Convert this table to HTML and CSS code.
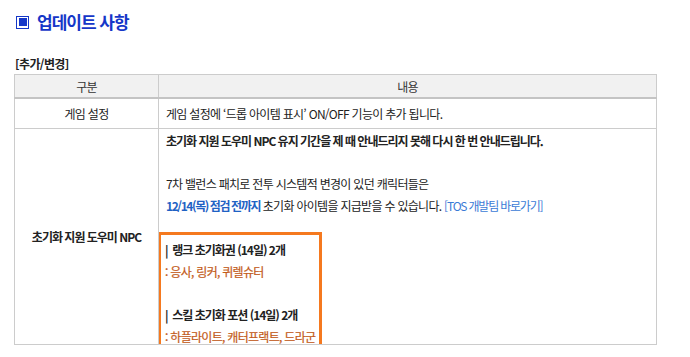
FILE: index.html
```html
<!DOCTYPE html>
<html lang="ko">
<head>
    <meta charset="UTF-8">
    <meta name="viewport" content="width=device-width, initial-scale=1.0">
    <title>업데이트 사항</title>
    <link rel="stylesheet" href="styles.css">
</head>
<body>
    <div class="notice">
        <h2 class="title"><span class="title-icon"></span>업데이트 사항</h2>

        <h3 class="section">[추가/변경]</h3>
        <table class="update-table">
            <tr>
                <th class="col-name">구분</th>
                <th>내용</th>
            </tr>
            <tr class="row-short">
                <td class="col-name">게임 설정</td>
                <td>게임 설정에 ‘드롭 아이템 표시’ ON/OFF 기능이 추가 됩니다.</td>
            </tr>
            <tr>
                <td class="col-name strong">초기화 지원 도우미 NPC</td>
                <td class="detail">
                    <p class="strong">초기화 지원 도우미 NPC 유지 기간을 제 때 안내드리지 못해 다시 한 번 안내드립니다.</p>
                    <p>&nbsp;</p>
                    <p>7차 밸런스 패치로 전투 시스템적 변경이 있던 캐릭터들은</p>
                    <p><b class="blue">12/14(목) 점검 전까지</b> 초기화 아이템을 지급받을 수 있습니다. <a class="link" href="#">[TOS 개발팀 바로가기]</a></p>
                    <div class="highlight">
                        <p class="strong">|&nbsp; 랭크 초기화권 (14일) 2개</p>
                        <p class="orange">: 응사, 링커, 퀴렐슈터</p>
                        <p>&nbsp;</p>
                        <p class="strong">|&nbsp; 스킬 초기화 포션 (14일) 2개</p>
                        <p class="orange">: 하플라이트, 캐터프랙트, 드라군</p>
                    </div>
                </td>
            </tr>
        </table>
    </div>
</body>
</html>
```

FILE: styles.css
```css
body {
    margin: 0;
    background-color: #fff;
    font-family: "Noto Sans CJK KR", "Noto Sans", sans-serif;
    color: #222;
}
.notice {
    padding: 10px 0 0 14px;
    width: 643px;
}
.title {
    display: flex;
    align-items: center;
    margin: 0 0 0 2px;
    font-size: 17px;
    line-height: 24px;
    letter-spacing: -1px;
    color: #1537c8;
}
.title-icon {
    width: 8px;
    height: 8px;
    border: 1.5px solid #1537c8;
    padding: 1.5px;
    background-clip: content-box;
    background-color: #1537c8;
    margin-right: 8px;
}
.section {
    margin: 22px 0 2px 1px;
    font-size: 12px;
    line-height: 16px;
    letter-spacing: -0.6px;
}
.update-table {
    width: 100%;
    border-collapse: collapse;
    border: 1px solid #b0b0b0;
    font-size: 12px;
    letter-spacing: -0.7px;
}
th, td {
    border: 1px solid #cccccc;
    padding: 0 7px;
    text-align: left;
}
th {
    height: 22px;
    background-color: #f1f1f1;
    border-bottom: 2px solid #c4c4c4;
    font-weight: normal;
    color: #333;
    text-align: center;
}
.col-name {
    width: 129px;
    text-align: center;
}
.row-short td {
    height: 29px;
}
.detail {
    padding-top: 1px;
    vertical-align: top;
}
.detail p {
    margin: 0;
    line-height: 21.6px;
}
.strong {
    font-weight: bold;
    letter-spacing: -1px;
}
.blue {
    color: #1f62c4;
    letter-spacing: -1.4px;
}
.link {
    color: #3b7bd6;
    letter-spacing: -1.2px;
    text-decoration: none;
}
/* orange frame around the reset item list, hangs a bit below the table */
.highlight {
    width: 154px;
    margin: 16px 0 -8px -8px;
    padding: 4px 0 2px 4px;
    border: 3px solid #f5791f;
}
.orange {
    color: #c25a18;
    -webkit-text-stroke: 0.2px #c25a18;
}
```
